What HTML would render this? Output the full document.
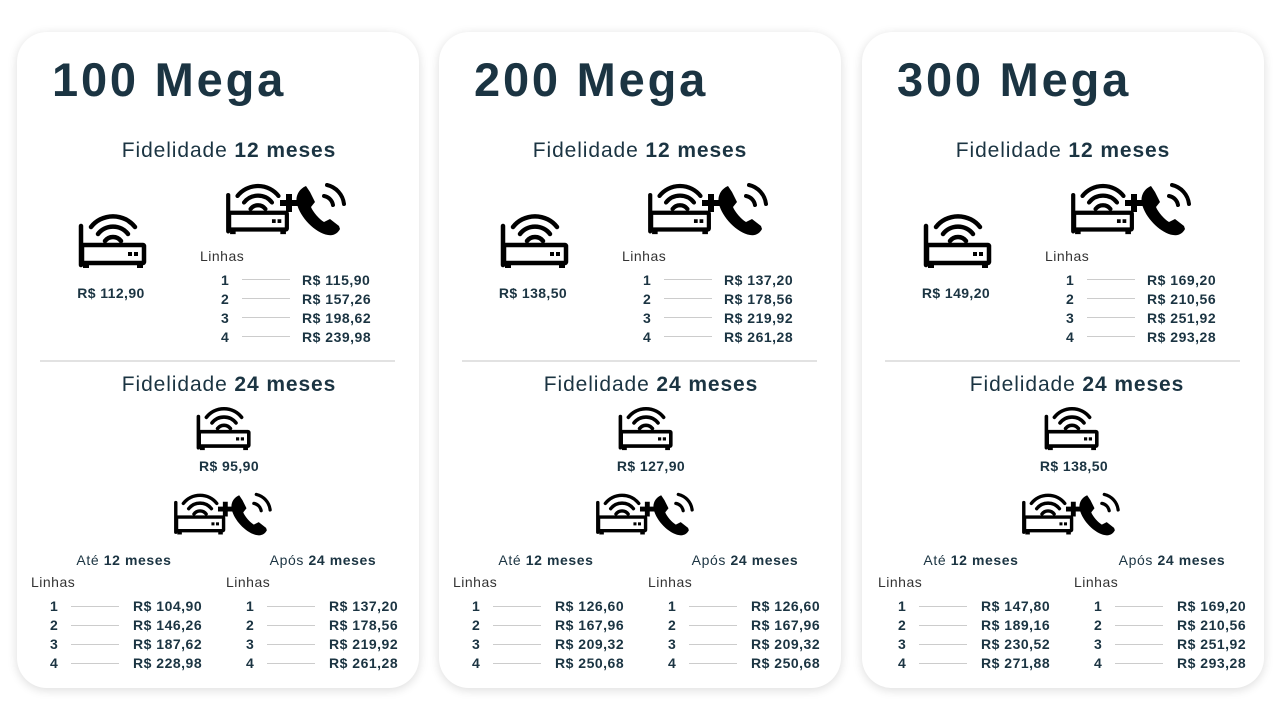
<!DOCTYPE html>
<html><head><meta charset="utf-8"><style>
*{margin:0;padding:0;box-sizing:border-box}
body{width:1280px;height:720px;background:#fff;position:relative;overflow:hidden;font-family:"Liberation Sans",sans-serif;color:#1b3442}
.card{position:absolute;top:32px;width:402px;height:656px;border-radius:30px;background:#fff;box-shadow:0 2px 10px rgba(0,0,0,0.14)}
.a{position:absolute;white-space:nowrap}
.t{left:35px;top:20px;font-size:47px;font-weight:bold;letter-spacing:2.8px}
.f{font-size:21px;width:300px;text-align:center;transform:translateX(-150px);letter-spacing:0.9px}
.f b{font-weight:bold}
.p{font-size:14px;font-weight:bold;width:120px;text-align:center;transform:translateX(-60px);letter-spacing:0.4px}
.l{font-size:14px;color:#333;letter-spacing:0.5px}
.n{font-size:14px;font-weight:bold}
.ln{height:1px;background:#ccc;width:48px}
.pr{font-size:14px;font-weight:bold;letter-spacing:0.5px}
.sep{left:23px;top:328px;width:355px;height:2px;background:#e2e2e2}
.h{font-size:14px;width:200px;text-align:center;transform:translateX(-100px);letter-spacing:0.6px}
</style></head><body>
<svg width="0" height="0" style="position:absolute">
<defs>
<symbol id="rt" viewBox="0 0 70 58">
<g fill="none" stroke="#000" stroke-width="4.5" stroke-linecap="round">
<path d="M27 29 A10 10 0 0 1 43 29"/>
<path d="M20 22 A19 19 0 0 1 50 22"/>
<path d="M13 15 A28 28 0 0 1 57 15"/>
<path d="M3 14 V53"/>
<rect x="4" y="33" width="62" height="18" rx="1"/>
</g>
<rect x="50" y="40" width="4" height="4"/><rect x="56" y="40" width="4" height="4"/>
<rect x="5" y="50" width="6" height="6"/><rect x="59" y="50" width="6" height="6"/>
</symbol>
<symbol id="cb" viewBox="0 0 128 54">
<use href="#rt" x="0" y="0" width="68" height="54"/>
<path d="M62 12h6v6h6v6h-6v6h-6v-6h-6v-6h6z"/>
<path d="M82 4c-7 3-11 10-9 18 3 13 18 29 31 31 6 1 10-2 12-6l-1-3-9-7-6 3c-5-3-11-10-13-15l4-5-5-10z"/>
<g fill="none" stroke="#000" stroke-width="4" stroke-linecap="round">
<path d="M100 14a11 11 0 0 1 9 9"/>
<path d="M103 3a22 22 0 0 1 17 19"/>
</g>
</symbol>
</defs></svg>

<div class="card" style="left:17px">
<div class="a t">100 Mega</div>
<div class="a f" style="left:212px;top:107px">Fidelidade <b>12 meses</b></div>
<svg class="a" style="left:61px;top:180px" width="70" height="58"><use href="#rt"/></svg>
<div class="a p" style="left:94px;top:253px">R$ 112,90</div>
<svg class="a" style="left:207px;top:150px" width="128" height="54"><use href="#cb"/></svg>
<div class="a l" style="left:183px;top:216px">Linhas</div>
<div class="a n" style="left:204px;top:239px;line-height:19px">1<br>2<br>3<br>4</div>
<div class="a ln" style="left:225px;top:247px"></div><div class="a ln" style="left:225px;top:266px"></div><div class="a ln" style="left:225px;top:285px"></div><div class="a ln" style="left:225px;top:304px"></div>
<div class="a pr" style="left:285px;top:239px;line-height:19px">R$ 115,90<br>R$ 157,26<br>R$ 198,62<br>R$ 239,98</div>
<div class="a sep"></div>
<div class="a f" style="left:212px;top:341px">Fidelidade <b>24 meses</b></div>
<svg class="a" style="left:179px;top:373px" width="56" height="47"><use href="#rt"/></svg>
<div class="a p" style="left:212px;top:426px">R$ 95,90</div>
<svg class="a" style="left:155px;top:460px" width="105" height="44"><use href="#cb"/></svg>
<div class="a h" style="left:107px;top:520px">Até <b>12 meses</b></div>
<div class="a h" style="left:306px;top:520px">Após <b>24 meses</b></div>
<div class="a l" style="left:14px;top:542px">Linhas</div>
<div class="a l" style="left:209px;top:542px">Linhas</div>
<div class="a n" style="left:33px;top:565px;line-height:19px">1<br>2<br>3<br>4</div>
<div class="a n" style="left:229px;top:565px;line-height:19px">1<br>2<br>3<br>4</div>
<div class="a ln" style="left:54px;top:574px"></div><div class="a ln" style="left:54px;top:593px"></div><div class="a ln" style="left:54px;top:612px"></div><div class="a ln" style="left:54px;top:631px"></div>
<div class="a ln" style="left:250px;top:574px"></div><div class="a ln" style="left:250px;top:593px"></div><div class="a ln" style="left:250px;top:612px"></div><div class="a ln" style="left:250px;top:631px"></div>
<div class="a pr" style="left:116px;top:565px;line-height:19px">R$ 104,90<br>R$ 146,26<br>R$ 187,62<br>R$ 228,98</div>
<div class="a pr" style="left:312px;top:565px;line-height:19px">R$ 137,20<br>R$ 178,56<br>R$ 219,92<br>R$ 261,28</div>
</div>

<div class="card" style="left:439px">
<div class="a t">200 Mega</div>
<div class="a f" style="left:201px;top:107px">Fidelidade <b>12 meses</b></div>
<svg class="a" style="left:61px;top:180px" width="70" height="58"><use href="#rt"/></svg>
<div class="a p" style="left:94px;top:253px">R$ 138,50</div>
<svg class="a" style="left:207px;top:150px" width="128" height="54"><use href="#cb"/></svg>
<div class="a l" style="left:183px;top:216px">Linhas</div>
<div class="a n" style="left:204px;top:239px;line-height:19px">1<br>2<br>3<br>4</div>
<div class="a ln" style="left:225px;top:247px"></div><div class="a ln" style="left:225px;top:266px"></div><div class="a ln" style="left:225px;top:285px"></div><div class="a ln" style="left:225px;top:304px"></div>
<div class="a pr" style="left:285px;top:239px;line-height:19px">R$ 137,20<br>R$ 178,56<br>R$ 219,92<br>R$ 261,28</div>
<div class="a sep"></div>
<div class="a f" style="left:212px;top:341px">Fidelidade <b>24 meses</b></div>
<svg class="a" style="left:179px;top:373px" width="56" height="47"><use href="#rt"/></svg>
<div class="a p" style="left:212px;top:426px">R$ 127,90</div>
<svg class="a" style="left:155px;top:460px" width="105" height="44"><use href="#cb"/></svg>
<div class="a h" style="left:107px;top:520px">Até <b>12 meses</b></div>
<div class="a h" style="left:306px;top:520px">Após <b>24 meses</b></div>
<div class="a l" style="left:14px;top:542px">Linhas</div>
<div class="a l" style="left:209px;top:542px">Linhas</div>
<div class="a n" style="left:33px;top:565px;line-height:19px">1<br>2<br>3<br>4</div>
<div class="a n" style="left:229px;top:565px;line-height:19px">1<br>2<br>3<br>4</div>
<div class="a ln" style="left:54px;top:574px"></div><div class="a ln" style="left:54px;top:593px"></div><div class="a ln" style="left:54px;top:612px"></div><div class="a ln" style="left:54px;top:631px"></div>
<div class="a ln" style="left:250px;top:574px"></div><div class="a ln" style="left:250px;top:593px"></div><div class="a ln" style="left:250px;top:612px"></div><div class="a ln" style="left:250px;top:631px"></div>
<div class="a pr" style="left:116px;top:565px;line-height:19px">R$ 126,60<br>R$ 167,96<br>R$ 209,32<br>R$ 250,68</div>
<div class="a pr" style="left:312px;top:565px;line-height:19px">R$ 126,60<br>R$ 167,96<br>R$ 209,32<br>R$ 250,68</div>
</div>

<div class="card" style="left:862px">
<div class="a t">300 Mega</div>
<div class="a f" style="left:201px;top:107px">Fidelidade <b>12 meses</b></div>
<svg class="a" style="left:61px;top:180px" width="70" height="58"><use href="#rt"/></svg>
<div class="a p" style="left:94px;top:253px">R$ 149,20</div>
<svg class="a" style="left:207px;top:150px" width="128" height="54"><use href="#cb"/></svg>
<div class="a l" style="left:183px;top:216px">Linhas</div>
<div class="a n" style="left:204px;top:239px;line-height:19px">1<br>2<br>3<br>4</div>
<div class="a ln" style="left:225px;top:247px"></div><div class="a ln" style="left:225px;top:266px"></div><div class="a ln" style="left:225px;top:285px"></div><div class="a ln" style="left:225px;top:304px"></div>
<div class="a pr" style="left:285px;top:239px;line-height:19px">R$ 169,20<br>R$ 210,56<br>R$ 251,92<br>R$ 293,28</div>
<div class="a sep"></div>
<div class="a f" style="left:215px;top:341px">Fidelidade <b>24 meses</b></div>
<svg class="a" style="left:182px;top:373px" width="56" height="47"><use href="#rt"/></svg>
<div class="a p" style="left:212px;top:426px">R$ 138,50</div>
<svg class="a" style="left:158px;top:460px" width="105" height="44"><use href="#cb"/></svg>
<div class="a h" style="left:109px;top:520px">Até <b>12 meses</b></div>
<div class="a h" style="left:310px;top:520px">Após <b>24 meses</b></div>
<div class="a l" style="left:16px;top:542px">Linhas</div>
<div class="a l" style="left:212px;top:542px">Linhas</div>
<div class="a n" style="left:36px;top:565px;line-height:19px">1<br>2<br>3<br>4</div>
<div class="a n" style="left:232px;top:565px;line-height:19px">1<br>2<br>3<br>4</div>
<div class="a ln" style="left:57px;top:574px"></div><div class="a ln" style="left:57px;top:593px"></div><div class="a ln" style="left:57px;top:612px"></div><div class="a ln" style="left:57px;top:631px"></div>
<div class="a ln" style="left:253px;top:574px"></div><div class="a ln" style="left:253px;top:593px"></div><div class="a ln" style="left:253px;top:612px"></div><div class="a ln" style="left:253px;top:631px"></div>
<div class="a pr" style="left:119px;top:565px;line-height:19px">R$ 147,80<br>R$ 189,16<br>R$ 230,52<br>R$ 271,88</div>
<div class="a pr" style="left:315px;top:565px;line-height:19px">R$ 169,20<br>R$ 210,56<br>R$ 251,92<br>R$ 293,28</div>
</div>
</body></html>
